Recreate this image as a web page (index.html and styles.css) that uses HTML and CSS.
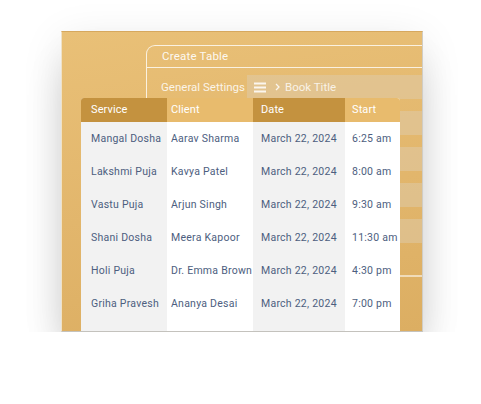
FILE: index.html
```html
<!DOCTYPE html>
<html>
<head>
<meta charset="utf-8">
<link rel="stylesheet" href="styles.css">
</head>
<body>
<div class="card">
  <div class="panel">
    <div class="panel-title">Create Table</div>
    <div class="form">
      <div class="form-row">
        <div class="label">General Settings</div>
        <div class="box">
          <svg class="menu" width="12" height="11" viewBox="0 0 12 11"><rect x="0" y="0.5" width="12" height="2" /><rect x="0" y="4.5" width="12" height="2" /><rect x="0" y="8.5" width="12" height="2" /></svg>
          <svg class="chev" width="5" height="8" viewBox="0 0 5 8"><path d="M1 1 L4 4 L1 7" fill="none" stroke-width="1.3"/></svg>
          <span>Book Title</span>
        </div>
      </div>
      <div class="form-row"><div class="label"></div><div class="box"></div></div>
      <div class="form-row"><div class="label"></div><div class="box"></div></div>
      <div class="form-row"><div class="label"></div><div class="box"></div></div>
      <div class="form-row"><div class="label"></div><div class="box"></div></div>
      <div class="divider"></div>
    </div>
  </div>

  <div class="table">
    <div class="col col-service">
      <div class="th dark">Service</div>
      <div class="td">Mangal Dosha</div>
      <div class="td">Lakshmi Puja</div>
      <div class="td">Vastu Puja</div>
      <div class="td">Shani Dosha</div>
      <div class="td">Holi Puja</div>
      <div class="td">Griha Pravesh</div>
    </div>
    <div class="col col-client">
      <div class="th light">Client</div>
      <div class="td">Aarav Sharma</div>
      <div class="td">Kavya Patel</div>
      <div class="td">Arjun Singh</div>
      <div class="td">Meera Kapoor</div>
      <div class="td">Dr. Emma Brown</div>
      <div class="td">Ananya Desai</div>
    </div>
    <div class="col col-date">
      <div class="th dark">Date</div>
      <div class="td">March 22, 2024</div>
      <div class="td">March 22, 2024</div>
      <div class="td">March 22, 2024</div>
      <div class="td">March 22, 2024</div>
      <div class="td">March 22, 2024</div>
      <div class="td">March 22, 2024</div>
    </div>
    <div class="col col-start">
      <div class="th light">Start</div>
      <div class="td">6:25 am</div>
      <div class="td">8:00 am</div>
      <div class="td">9:30 am</div>
      <div class="td">11:30 am</div>
      <div class="td">4:30 pm</div>
      <div class="td">7:00 pm</div>
    </div>
  </div>
</div>
</body>
</html>
```

FILE: styles.css
```css
html, body {
  margin: 0;
  padding: 0;
  background: #ffffff;
}
body {
  padding: 31px 0 0 61px;
  font-family: Roboto, "Liberation Sans", Arial, sans-serif;
  font-size: 11px;
}
.card {
  position: relative;
  width: 360px;
  height: 299px;
  overflow: hidden;
  background: linear-gradient(172deg, #e9c077 0%, #e2b66c 55%, #dcae62 100%);
  border-top: 1px solid #d6a85e;
  border-left: 1px solid #efe2c8;
  border-right: 1px solid #d0ccc4;
  border-bottom: 1px solid #c4c2bd;
  box-shadow: 0 30px 40px -8px rgba(0,0,0,0.2), 0 8px 40px rgba(0,0,0,0.09);
}
.panel {
  margin: 13px 0 0 84px;
  width: 330px;
  border-top: 1px solid rgba(255,255,255,0.78);
  border-left: 1px solid rgba(255,255,255,0.78);
  border-top-left-radius: 9px;
}
.panel-title {
  height: 21px;
  line-height: 21px;
  padding-left: 15px;
  color: rgba(255,255,255,0.92);
  font-size: 11.5px;
  letter-spacing: 0.2px;
  border-bottom: 1px solid rgba(255,255,255,0.78);
}
.form {
  padding-top: 7px;
  display: flex;
  flex-direction: column;
  gap: 12px;
}
.form-row {
  display: flex;
  align-items: center;
  height: 24px;
}
.label {
  width: 100px;
  padding-left: 14px;
  box-sizing: border-box;
  color: rgba(255,255,255,0.85);
  font-size: 11.5px;
  white-space: nowrap;
}
.box {
  flex: 1;
  height: 24px;
  display: flex;
  align-items: center;
  background: rgba(222,206,180,0.45);
  color: rgba(255,255,255,0.8);
  font-size: 11.5px;
}
.menu {
  margin-left: 7px;
  fill: rgba(255,255,255,0.85);
}
.chev {
  margin-left: 9px;
  stroke: rgba(255,255,255,0.85);
}
.box span {
  margin-left: 5px;
}
.divider {
  margin-top: 20px;
  height: 2px;
  background: rgba(255,255,255,0.55);
}
.table {
  position: absolute;
  left: 19px;
  top: 66px;
  bottom: 0;
  display: flex;
  border-radius: 3px 3px 0 0;
  overflow: hidden;
}
.col {
  display: flex;
  flex-direction: column;
}
.col-service { width: 86px; background: #f2f2f2; }
.col-client { width: 86px; background: #ffffff; }
.col-date { width: 92px; background: #f2f2f2; }
.col-start { width: 55px; background: #ffffff; }
.col-service > div { padding-left: 10px; }
.col-client > div { padding-left: 4px; }
.col-date > div { padding-left: 8px; }
.col-start > div { padding-left: 7px; }
.th {
  height: 24px;
  line-height: 24px;
  color: #ffffff;
  font-size: 11px;
  letter-spacing: 0.1px;
}
.th.dark { background: #c4923f; }
.th.light { background: #e8bb6d; }
.td {
  height: 33px;
  line-height: 34px;
  color: #4d5e80;
  font-size: 10.5px;
  letter-spacing: 0.25px;
  white-space: nowrap;
}
```
